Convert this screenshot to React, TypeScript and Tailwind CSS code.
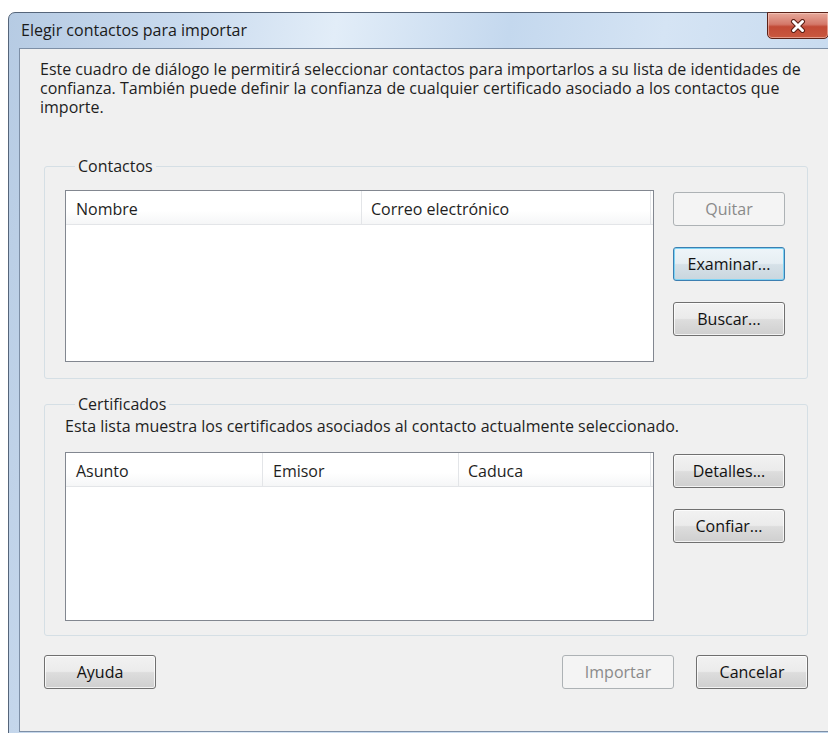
import React from "react";

type Col = { label: string; w?: number };

const btnBase =
  "h-[34px] w-[112px] shrink-0 rounded-[3px] border text-[16px] leading-none flex items-center justify-center";
const btnNormal =
  btnBase +
  " border-[#707070] text-[#111] bg-[linear-gradient(to_bottom,#f2f2f2_0%,#ebebeb_48%,#dddddd_52%,#cfcfcf_100%)] shadow-[inset_0_0_0_1px_rgba(255,255,255,0.75)]";
const btnDefault =
  btnBase +
  " border-[#3c7fb1] text-[#111] bg-[linear-gradient(to_bottom,#eef5f9_0%,#e6eef3_48%,#d6e1e8_52%,#c9d6de_100%)] shadow-[inset_0_0_0_1px_#7ed3f4]";
const btnDisabled =
  btnBase + " border-[#adb2b5] text-[#8a8a8a] bg-[#f4f4f4]";

function ListView({ cols, height }: { cols: Col[]; height: string }) {
  return (
    <div className={"w-[589px] border border-[#828790] bg-white flex flex-col " + height}>
      <div className="flex h-[34px] border-b border-[#e3e5e8] bg-[linear-gradient(to_bottom,#ffffff_0%,#ffffff_60%,#f5f6f7_100%)]">
        {cols.map((c, i) =>
          c.w ? (
            <div
              key={i}
              style={{ width: c.w }}
              className="flex items-center pl-[10px] pt-[2px] border-r border-[#e3e5e8] text-[#1e1e1e]"
            >
              {c.label}
            </div>
          ) : (
            <div
              key={i}
              className="flex flex-1 items-center pl-[9px] pt-[2px] mr-[2px] border-r border-[#e3e5e8] text-[#1e1e1e]"
            >
              {c.label}
            </div>
          )
        )}
      </div>
    </div>
  );
}

function CloseGlyph() {
  return (
    <svg width="16" height="14" viewBox="0 0 16 14">
      <path d="M3.5 2.5 L12.5 11.5 M12.5 2.5 L3.5 11.5" stroke="#5a1e14" strokeWidth="5" strokeLinecap="round" />
      <path d="M3.5 2.5 L12.5 11.5 M12.5 2.5 L3.5 11.5" stroke="#ffffff" strokeWidth="3" strokeLinecap="round" />
    </svg>
  );
}

export default function App() {
  return (
    <div className="w-[828px] h-[733px] bg-white overflow-hidden font-['Open_Sans',sans-serif] text-[16px] text-[#1e1e1e]">
      <div className="ml-[8px] mt-[12px] w-[840px] h-[740px] rounded-tl-[7px] border border-[#55657a] bg-[linear-gradient(100deg,#b6cbe3_0%,#c9daee_18%,#e2edf8_34%,#c4d8ee_52%,#d5e4f4_68%,#bed4ec_100%)] flex flex-col">
        {/* title bar */}
        <div className="h-[35px] flex items-start">
          <div className="flex-1 pl-[12px] pt-[8px] leading-[18px] text-[16px] text-[#1a1a1a]">
            Elegir contactos para importar
          </div>
          <div className="mr-[18px] -mt-px w-[62px] h-[27px] rounded-b-[5px] border border-[#5b2218] bg-[linear-gradient(to_bottom,#e6a89a_0%,#d4786a_45%,#c24a36_55%,#c9583f_100%)] shadow-[inset_0_0_0_1px_rgba(255,220,210,0.5)] flex items-center justify-center">
            <CloseGlyph />
          </div>
        </div>

        {/* client area */}
        <div className="ml-[10px] mr-[10px] h-[684px] border border-[#7d8fa6] bg-[#f0f0f0] flex flex-col">
          <p className="pl-[20px] pt-[11px] leading-[19px]">
            Este cuadro de diálogo le permitirá seleccionar contactos para importarlos a su lista de identidades de
            <br />
            confianza. También puede definir la confianza de cualquier certificado asociado a los contactos que
            <br />
            importe.
          </p>

          <fieldset className="ml-[24px] mt-[40px] w-[764px] rounded-[3px] border border-[#d5dfe5] pl-[20px] pr-[22px] pt-[15px] pb-[16px] flex">
            <legend className="ml-[10px] px-[3px] leading-[18px]">Contactos</legend>
            <div className="flex gap-[19px]">
              <ListView
                height="h-[172px]"
                cols={[{ label: "Nombre", w: 296 }, { label: "Correo electrónico" }]}
              />
              <div className="flex flex-col gap-[21px] pt-[2px]">
                <div className={btnDisabled}>Quitar</div>
                <div className={btnDefault}>Examinar...</div>
                <div className={btnNormal}>Buscar...</div>
              </div>
            </div>
          </fieldset>

          <fieldset className="ml-[24px] mt-[16px] w-[764px] rounded-[3px] border border-[#d5dfe5] pl-[20px] pr-[22px] pt-[4px] pb-[14px]">
            <legend className="ml-[10px] px-[3px] leading-[18px]">Certificados</legend>
            <div className="leading-[18px]">
              Esta lista muestra los certificados asociados al contacto actualmente seleccionado.
            </div>
            <div className="mt-[17px] flex gap-[19px]">
              <ListView
                height="h-[169px]"
                cols={[
                  { label: "Asunto", w: 197 },
                  { label: "Emisor", w: 196 },
                  { label: "Caduca" },
                ]}
              />
              <div className="flex flex-col gap-[21px] pt-[2px]">
                <div className={btnNormal}>Detalles...</div>
                <div className={btnNormal}>Confiar...</div>
              </div>
            </div>
          </fieldset>

          <div className="ml-[24px] mt-[19px] w-[764px] flex">
            <div className={btnNormal}>Ayuda</div>
            <div className="flex-1" />
            <div className={btnDisabled}>Importar</div>
            <div className="w-[22px]" />
            <div className={btnNormal}>Cancelar</div>
          </div>
        </div>
      </div>
    </div>
  );
}
